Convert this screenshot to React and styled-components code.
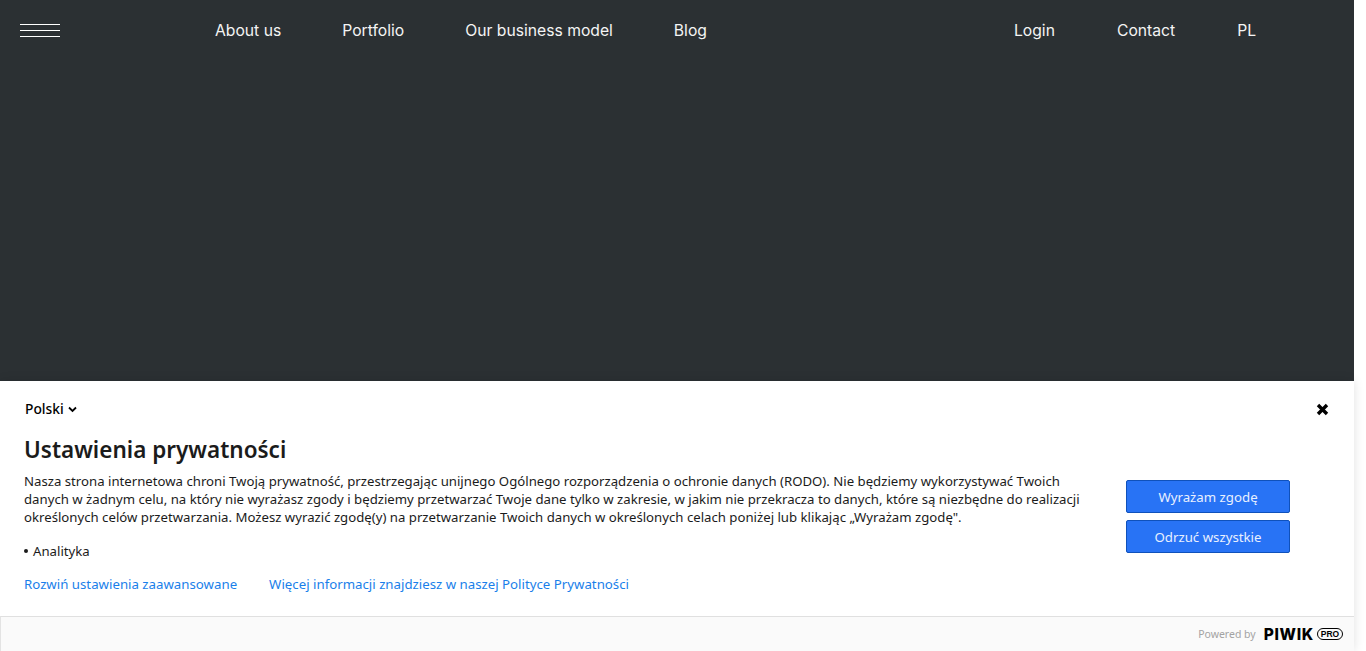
import React from 'react';
import styled, { createGlobalStyle } from 'styled-components';

const Global = createGlobalStyle`
  html, body { margin: 0; padding: 0; height: 100%; overflow: hidden; background: #fff; }
  #root { height: 651px; }
  * { box-sizing: border-box; }
`;

const Page = styled.div`
  position: relative;
  width: 1354px;
  height: 651px;
  background: #2b3033;
`;

const Header = styled.header`
  display: flex;
  align-items: center;
  height: 60px;
  padding-left: 20px;
  font-family: Inter, "Liberation Sans", sans-serif;
  font-size: 15.7px;
  color: #f4f4f4;
`;

const Burger = styled.div`
  display: flex;
  flex-direction: column;
  gap: 5px;
  width: 40px;
  margin-right: 155px;
  span { display: block; height: 1px; background: #fff; }
`;

const Nav = styled.nav`
  display: flex;
  gap: ${p => p.$gap}px;
  margin-right: ${p => p.$end || 0}px;
`;

const NavLink = styled.span`
  white-space: nowrap;
`;

const Consent = styled.section`
  position: absolute;
  left: 0;
  right: 0;
  bottom: 0;
  height: 270px;
  background: #fff;
  box-shadow: 0 0 10px rgba(0, 0, 0, 0.12);
  font-family: "Noto Sans", sans-serif;
  color: #1b1b1b;
  display: flex;
  flex-direction: column;
`;

const Body = styled.div`
  position: relative;
  flex: 1;
  padding: 20px 24px 0;
`;

const Lang = styled.div`
  display: flex;
  align-items: center;
  gap: 4px;
  padding-left: 1px;
  font-size: 13.8px;
  line-height: 16px;
  font-weight: 500;
  color: #000;
`;

const Close = styled.svg`
  position: absolute;
  right: 25px;
  top: 22px;
`;

const Title = styled.h2`
  margin: 18px 0 0;
  font-size: 22.5px;
  line-height: 30px;
  font-weight: 600;
  color: #1b1b1b;
`;

const Columns = styled.div`
  display: flex;
  align-items: flex-start;
  margin-top: 7px;
`;

const Main = styled.div`
  width: 1102px;
`;

const Text = styled.p`
  margin: 0;
  width: 1060px;
  font-size: 13.2px;
  line-height: 18px;
`;

const Purpose = styled.ul`
  margin: 16px 0 0;
  padding: 0;
  list-style: none;
  font-size: 13.2px;
  line-height: 18px;
  li { display: flex; align-items: center; gap: 5px; }
  li::before { content: ""; width: 4px; height: 4px; border-radius: 50%; background: #1b1b1b; }
`;

const Links = styled.div`
  display: flex;
  gap: 32px;
  margin-top: 15px;
`;

const TextLink = styled.a`
  font-size: 13.25px;
  line-height: 18px;
  color: #1a7fea;
`;

const Actions = styled.div`
  display: flex;
  flex-direction: column;
  gap: 7px;
  width: 164px;
  margin-top: 8px;
`;

const Btn = styled.button`
  height: 33px;
  border: 1px solid #0f51bb;
  border-radius: 2px;
  background: #2873f5;
  color: #e8f0ff;
  font-family: inherit;
  font-size: 13.25px;
  padding: 0;
`;

const Footer = styled.footer`
  display: flex;
  align-items: center;
  justify-content: flex-end;
  height: 35px;
  padding-right: 11px;
  background: #fafafa;
  border-top: 1px solid #e0e0e0;
  border-left: 1px solid #e3e3e3;
`;

const Powered = styled.span`
  font-size: 10.5px;
  color: #a3a3a3;
  margin-right: 8px;
`;

const Piwik = styled.span`
  font-family: Inter, "Liberation Sans", sans-serif;
  font-weight: 800;
  font-size: 15.5px;
  letter-spacing: 0.7px;
  color: #000;
  margin-right: 3px;
`;

const Pro = styled.span`
  display: inline-flex;
  align-items: center;
  justify-content: center;
  width: 26px;
  height: 12px;
  border: 1.5px solid #000;
  border-radius: 6px;
  font-family: "Liberation Sans", sans-serif;
  font-weight: 700;
  font-size: 8.5px;
  color: #000;
`;

export default function App() {
  return (
    <>
      <Global />
      <Page>
        <Header>
          <Burger><span /><span /><span /></Burger>
          <Nav $gap={61} $end={307}>
            <NavLink>About us</NavLink>
            <NavLink>Portfolio</NavLink>
            <NavLink>Our business model</NavLink>
            <NavLink>Blog</NavLink>
          </Nav>
          <Nav $gap={62}>
            <NavLink>Login</NavLink>
            <NavLink>Contact</NavLink>
            <NavLink>PL</NavLink>
          </Nav>
        </Header>
        <Consent>
          <Body>
            <Lang>
              Polski
              <svg width="9" height="7" viewBox="0 0 9 7" fill="none" stroke="#000" strokeWidth="1.8"><path d="M1 1.5 4.5 5 8 1.5" /></svg>
            </Lang>
            <Close width="13" height="13" viewBox="0 0 13 13" fill="none" stroke="#000" strokeWidth="3.4"><path d="M2 2 11 11M11 2 2 11" /></Close>
            <Title>Ustawienia prywatności</Title>
            <Columns>
              <Main>
                <Text>Nasza strona internetowa chroni Twoją prywatność, przestrzegając unijnego Ogólnego rozporządzenia o ochronie danych (RODO). Nie będziemy wykorzystywać Twoich danych w żadnym celu, na który nie wyrażasz zgody i będziemy przetwarzać Twoje dane tylko w zakresie, w jakim nie przekracza to danych, które są niezbędne do realizacji określonych celów przetwarzania. Możesz wyrazić zgodę(y) na przetwarzanie Twoich danych w określonych celach poniżej lub klikając „Wyrażam zgodę".</Text>
                <Purpose><li>Analityka</li></Purpose>
                <Links>
                  <TextLink>Rozwiń ustawienia zaawansowane</TextLink>
                  <TextLink>Więcej informacji znajdziesz w naszej Polityce Prywatności</TextLink>
                </Links>
              </Main>
              <Actions>
                <Btn>Wyrażam zgodę</Btn>
                <Btn>Odrzuć wszystkie</Btn>
              </Actions>
            </Columns>
          </Body>
          <Footer>
            <Powered>Powered by</Powered>
            <Piwik>PIWIK</Piwik>
            <Pro>PRO</Pro>
          </Footer>
        </Consent>
      </Page>
    </>
  );
}
